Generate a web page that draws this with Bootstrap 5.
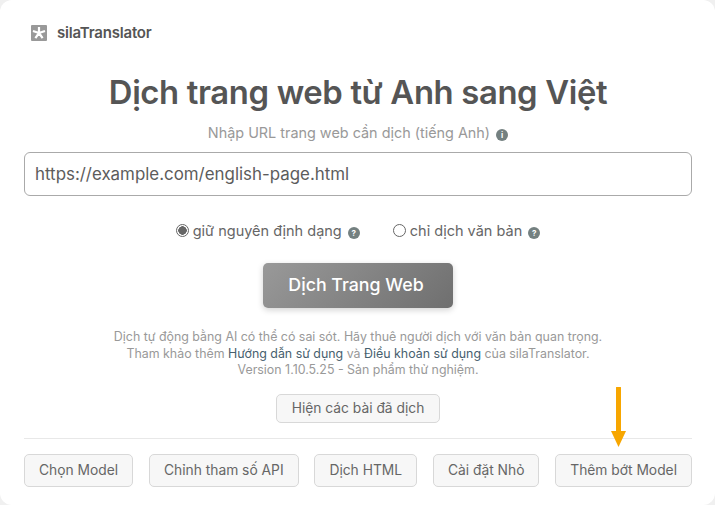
<!DOCTYPE html>
<html lang="vi">
<head>
  <meta charset="UTF-8">
  <title>silaTranslator</title>
  <meta name="viewport" content="width=device-width, initial-scale=1">
  <link href="https://cdn.jsdelivr.net/npm/bootstrap@5.3.0/dist/css/bootstrap.min.css" rel="stylesheet">
  <style>
    html, body { height: 100%; }
    body { background: #f0f0f0; font-family: "Inter", "Noto Sans", sans-serif; color: #555; overflow: hidden; }
    .app-panel { width: 715px; height: 505px; background: #fff; border-radius: 12px; padding: 25px 23px 18px 24px; position: relative; }
    .brand-row { height: 16px; margin-left: 7px; font-size: 15px; font-weight: 600; color: #555; letter-spacing: -0.2px; gap: 10px; }
    .page-title { font-size: 32.8px; font-weight: 600; color: #555; margin: 31px 0 0; line-height: 40px; letter-spacing: -0.35px; }
    .url-hint { font-size: 14.4px; color: #999; margin: 11px 0 0; line-height: 20px; }
    .url-box.form-control { height: 44px; margin-top: 9px; font-size: 16.9px; color: #5c5c5c; border-color: #aaa; border-radius: 6px; padding: 0 10px; }
    .mode-row { margin-top: 25px; height: 20px; font-size: 14.5px; color: #666; gap: 33px; }
    .mode-row .form-check { margin: 0; min-height: 0; padding-left: 17px; line-height: 20px; }
    .mode-row .form-check-input { width: 13px; height: 13px; margin: 3px 0 0 -17px; border-color: #666; background-color: #fff; }
    .mode-row .form-check-input:checked { background-color: #fff; border-color: #666; background-image: radial-gradient(circle, #666 0 4px, transparent 4.5px); }
    .tip-dot { display: inline-flex; align-items: center; justify-content: center; width: 12px; height: 12px; border-radius: 50%; background: #748080; color: #fff; font-size: 8px; font-weight: 700; margin-left: 2px; vertical-align: 0; line-height: 1; }
    .go-btn.btn { width: 190px; height: 45px; margin-top: 22px; font-size: 17.8px; font-weight: 500; color: #fff; border: 0; border-radius: 5px; background: linear-gradient(135deg, #999, #6f6f6f); box-shadow: 0 2px 6px rgba(0,0,0,.18); padding: 0 4px 0 0; }
    .fine-print { font-size: 12.4px; color: #999; line-height: 16.5px; margin: 21px 0 0; }
    .fine-print a { color: #47606e; text-decoration: none; }
    .soft-btn.btn { background: #f7f7f7; border: 1px solid #d8d8d8; color: #666; font-size: 13.8px; border-radius: 5px; height: 33px; padding: 0 14px; }
    .history-btn.btn { height: 29px; margin-top: 15px; padding: 0 15px; }
    .foot-rule { border: 0; border-top: 1px solid #e8e8e8; opacity: 1; margin: 15px 0; }
    .arrow-mark { position: absolute; left: 611px; top: 387px; }
  </style>
</head>
<body>

<div class="app-panel">
  <!-- logo -->
  <div class="brand-row d-flex align-items-center">
    <svg width="16" height="16" viewBox="0 0 16 16"><rect width="16" height="16" rx="1" fill="#999"/><path d="M8 8V2M8 8l6-2M8 8l-6-2M8 8l3.6 5.2M8 8l-3.6 5.2" stroke="#fff" stroke-width="2.2"/></svg>
    <span>silaTranslator</span>
  </div>

  <div class="text-center">
    <h1 class="page-title">Dịch trang web từ Anh sang Việt</h1>
    <p class="url-hint">Nhập URL trang web cần dịch (tiếng Anh) <span class="tip-dot">i</span></p>
  </div>

  <input type="text" class="form-control url-box" value="https://example.com/english-page.html">

  <div class="mode-row d-flex justify-content-center">
    <div class="form-check">
      <input class="form-check-input" type="radio" name="mode" id="modeKeep" checked>
      <label class="form-check-label" for="modeKeep">giữ nguyên định dạng <span class="tip-dot">?</span></label>
    </div>
    <div class="form-check">
      <input class="form-check-input" type="radio" name="mode" id="modeText">
      <label class="form-check-label" for="modeText">chỉ dịch văn bản <span class="tip-dot">?</span></label>
    </div>
  </div>

  <div class="text-center">
    <button class="btn go-btn">Dịch Trang Web</button>
    <p class="fine-print">Dịch tự động bằng AI có thể có sai sót. Hãy thuê người dịch với văn bản quan trọng.<br>
      Tham khảo thêm <a href="#">Hướng dẫn sử dụng</a> và <a href="#">Điều khoản sử dụng</a> của silaTranslator.<br>
      Version 1.10.5.25 - Sản phẩm thử nghiệm.</p>
    <button class="btn soft-btn history-btn">Hiện các bài đã dịch</button>
  </div>

  <hr class="foot-rule">

  <div class="d-flex justify-content-between">
    <button class="btn soft-btn">Chọn Model</button>
    <button class="btn soft-btn">Chỉnh tham số API</button>
    <button class="btn soft-btn">Dịch HTML</button>
    <button class="btn soft-btn">Cài đặt Nhỏ</button>
    <button class="btn soft-btn">Thêm bớt Model</button>
  </div>

  <svg class="arrow-mark" width="15" height="60" viewBox="0 0 15 60"><path d="M7.5 1v46" stroke="#f7a600" stroke-width="5" stroke-linecap="round"/><path d="M0 44h15l-7.5 16z" fill="#f7a600"/></svg>
</div>

</body>
</html>
